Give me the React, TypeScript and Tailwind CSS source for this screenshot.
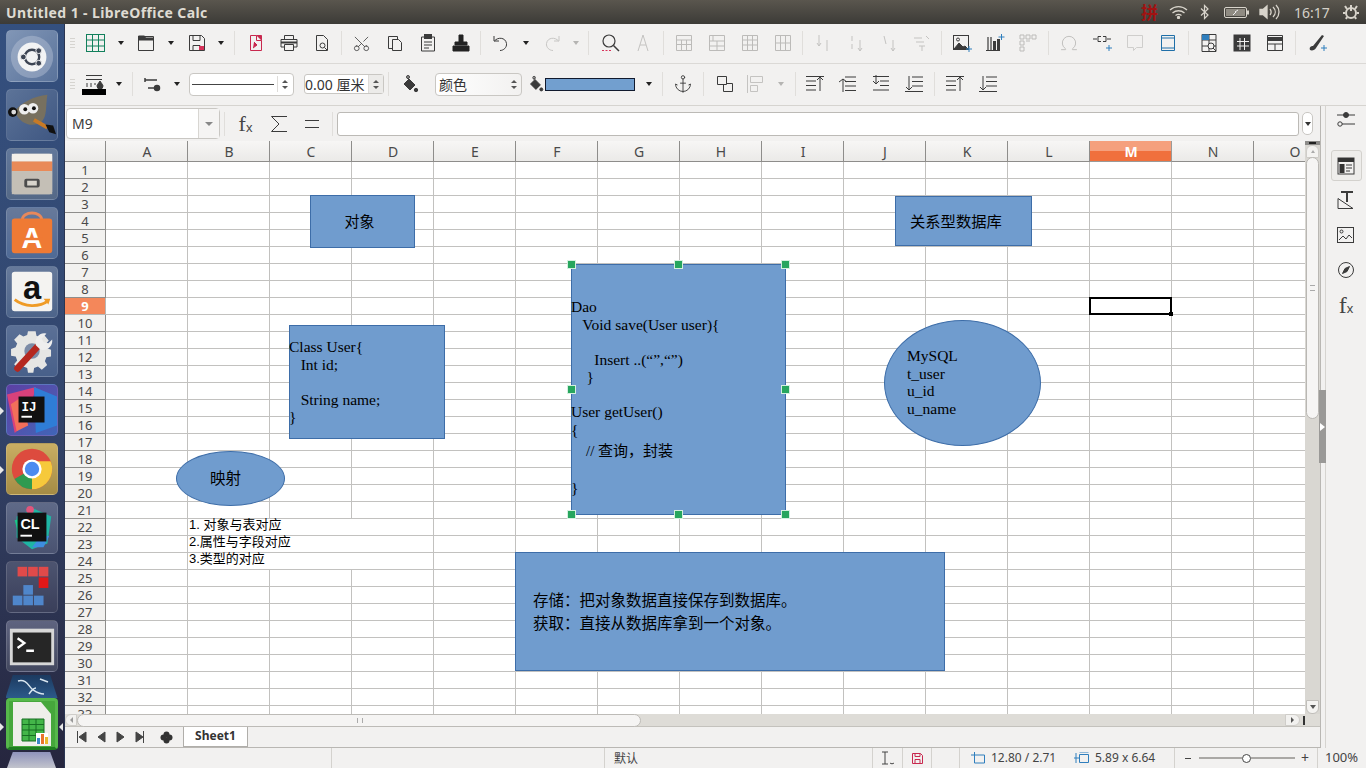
import React from 'react';
import { Scissors, Anchor, Omega } from 'lucide-react';

const D = '#3b3b3b';
type P = { children?: React.ReactNode; s?: number; c?: string; w?: number };
const G = ({ children, s = 20, c = D, w = 1 }: P) => (
  <svg width={s} height={s} viewBox="0 0 20 20" fill="none" stroke={c} strokeWidth={w}>{children}</svg>
);

const icons: Record<string, React.ReactNode> = {
  table: <G c="#12805c"><rect x=".5" y="1.5" width="18" height="17" /><path d="M.5 7h18M.5 13h18M6.500 1.500v17M12.500 1.500v17" /></G>,
  open: <G><path d="M2.500 3.500h15v14h-15z" /><path d="M2.500 3h6l1 2h8v2h-15z" fill={D} /></G>,
  save: <G><path d="M2.500 2.500h12l3 3v12h-15z" /><path d="M6 2.500v5h7v-5M6 17.500v-5h7v5" /><rect x="12" y="13" width="5" height="4" fill="#d8325a" stroke="none" /></G>,
  pdf: <G c="#c8284e"><path d="M4.500 2.500h6v5h5v10h-11z" /><path d="M10.500 2.500h5v5M8 9l3 3-4 3" fill="#c8284e" /></G>,
  print: <G><path d="M5.500 6.500v-4h9v4M5.500 14h-3.500v-7.500h16v7.500h-3.500" /><path d="M5.500 11.500h9v6h-9z" /><path d="M2 9.500h16" strokeWidth="2" /></G>,
  preview: <G><path d="M4.500 2.500h7l4 4v11h-11z" /><circle cx="10.500" cy="12.500" r="2.500" /><path d="M12.500 14.500l2.500 2.500" /></G>,
  cut: <Scissors size={19} strokeWidth={1} color={D} className="rotate-[-90deg]" />,
  copy: <G><path d="M3.500 3.500h9v12h-9z" /><path d="M7.500 6.500h6l3 3v8h-9z" fill="#f2f1f0" /></G>,
  paste: <G><path d="M3.500 4h13v14h-13z" /><rect x="6.500" y="1.500" width="7" height="4" fill={D} /><path d="M6 9h8M6 12h8M6 15h5" /></G>,
  clone: <G c="#222"><path d="M8 2h4v7h4v3h-12v-3h4z" fill="#222" /><path d="M2 13h16v5h-16z" fill="#222" /></G>,
  undo: <G><path d="M3 3v5h5" /><path d="M3.500 8c3-4 11-4 12 2.500c.5 4-3 7-6.500 7" /></G>,
  redo: <G c="#c7c6c4"><path d="M17 3v5h-5" /><path d="M16.500 8c-3-4-11-4-12 2.500c-.5 4 3 7 6.500 7" /></G>,
  find: <G w={1.2}><circle cx="9" cy="8" r="6" /><path d="M13.500 12.500l5.500 5.500" strokeWidth="1.500" /><path d="M2 17.500h10" stroke="#d8325a" strokeDasharray="2 1.500" /></G>,
  spell: <G c="#c4c3c1"><path d="M5 18L10 2l5 16M7 12h6" /></G>,
  r1: <G c="#bcbbb9"><path d="M2.500 2.500h15v15h-15zM2.500 7h15M2.500 11.500h15M7.500 7v10.500M12.500 7v10.500" /></G>,
  r2: <G c="#bcbbb9"><path d="M2.500 2.500h15v15h-15zM2.500 8h15M2.500 13h15M10 8v9.500M6 2.500v5.500" /></G>,
  r3: <G c="#bcbbb9"><path d="M2.500 2.500h15v15h-15zM2.500 7h15M2.500 12h15M7.500 2.500v15M12.500 2.500v15" /></G>,
  r4: <G c="#bcbbb9"><path d="M2.500 2.500h15v15h-15zM7.500 2.500v15M12.500 2.500v15M2.500 10h15" /></G>,
  s1: <G c="#c4c3c1"><path d="M6 2v11M14 7v11M4 10l2 3 2-3" /></G>,
  s2: <G c="#c4c3c1"><path d="M6 3v5M6 11v5M14 7v11M12 15l2 3 2-3" /></G>,
  s3: <G c="#c4c3c1"><path d="M5 3l2 8M14 7v11M12 15l2 3 2-3" /></G>,
  s4: <G c="#c4c3c1"><path d="M2 5h8M4 9h8M7 13h6M10 13v5M14 3l3 3" /></G>,
  image: <G><rect x="1.500" y="2.500" width="15" height="14" fill="#f2f1f0" /><path d="M2 16l5-6 4 4 2-1 3 3z" fill={D} /><circle cx="6" cy="6.500" r="1.500" /><path d="M17 13v6M14 16h6" stroke="#2f7ebd" /></G>,
  chart: <G><path d="M1 17.500h14M3 4v13M6 4v13" strokeWidth="1.200" /><rect x="8" y="8" width="3" height="9" fill={D} stroke="none" /><rect x="12" y="6" width="3" height="11" fill={D} stroke="none" /><path d="M16.500 1v6M13.500 4h6" stroke="#2f7ebd" /></G>,
  pivot: <G c="#bcbbb9"><path d="M2 2h4v4h-4zM8 2h4v4h-4zM14 2h4v4h-4zM2 8h4v4h-4zM8 8h4M2 14h4v4h-4z" /></G>,
  omega: <Omega size={20} strokeWidth={1.1} color="#bcbbb9" />,
  link: <G><path d="M1 6h4M15 6h4M6 3.500h3M11 3.500h3M6 8.500h3M11 8.500h3M6 3.500v5M14 3.500v5" /><path d="M14 15h6M17 12v6" stroke="#2f7ebd" /></G>,
  comment: <G c="#cfcecc"><path d="M2.500 2.500h15v12h-6l-3 3v-3h-6z" /></G>,
  header: <G c="#1f6fa8"><path d="M3.500 2.500h13v15h-13z" /><path d="M3.500 5h13M3.500 15h13" /></G>,
  area: <G><path d="M3 1.500h14v17h-14zM3 7h14M3 13h14M10 1.500v17" /><rect x="3" y="1.500" width="7" height="5.500" fill="#2f7ebd" stroke="none" /><circle cx="12" cy="13" r="3" fill="#f2f1f0" /><path d="M14 15l3 3" /></G>,
  freeze: <G><rect x="2" y="2" width="16" height="16" fill="#3b3b3b" /><path d="M5 8.500h12M5 13h12M8 5v12M12.500 5v12" stroke="#f2f1f0" /></G>,
  split: <G><path d="M2.500 2.500h15v15h-15z" /><path d="M2 6h16" strokeWidth="4" /><path d="M2.500 11h15M10 11v6.500" /></G>,
  draw: <G><path d="M3 17c-1-3 1-4 3-4l9-11 2 1-8 12c-1 2-4 3-6 2z" fill={D} stroke="none" /><path d="M17 12v6M14 15h6" stroke="#2f7ebd" /></G>,
  lineColor: <svg width="24" height="22" viewBox="0 0 24 22" fill="none" stroke={D}><path d="M4 2.500h16M4 6.500h16" /><path d="M4 11h2M8 11h2M12 11h2M4 13h2M8 13h2" /><path d="M18 8c-2 3-3 4-3 5a3 3 0 006 0c0-1-1-2-3-5z" fill={D} /><rect x="0" y="16" width="24" height="6" fill="#000" stroke="none" /></svg>,
  arrow: <svg width="17" height="15" viewBox="0 0 17 15" fill={D} stroke={D} strokeWidth="1.500"><path d="M1 3h12M4 11h12" /><path d="M1 1v4" /><circle cx="13" cy="11" r="2.500" /></svg>,
  fill: <G><path d="M9 2v3M5 10l5-5 6 6-5 5z" fill={D} /><circle cx="9" cy="3" r="1.500" /><circle cx="17" cy="16" r="1.700" fill={D} /></G>,
  wrap: <G><path d="M2.500 2.500h9v8h-9z" /><path d="M8.500 10.500v7h9v-8h-6" /></G>,
  align: <G c="#c4c3c1"><path d="M2.500 1v18M5.500 2.500h12v6h-12zM5.500 11.500h7v6h-7z" /></G>,
  up1: <G><path d="M1 2.500h18M1 7h10M1 11.500h10M1 16h10M15 17V3M12 6l3-3 3 3" /></G>,
  up2: <G><path d="M7 3h11M7 7.500h11M7 12h11M7 16.500h11M1 8l4-3 4 3M5 5v13" /></G>,
  dn1: <G><path d="M2 2.500h16M9 7h9M9 11.500h9M2 16h16M5 1v9M2 7l3 3 3-3" /></G>,
  dn2: <G><path d="M8 3h11M8 7.500h11M8 12h11M1 17.500h18M5 2v14M2 13l3 3 3-3" /></G>,
  sliders: <G><path d="M1 5h18M6 14h13" /><circle cx="10" cy="5" r="2.500" fill={D} /><circle cx="4" cy="14" r="2.200" /></G>,
  props: <G><rect x="2" y="2" width="16" height="16" fill="#f2f1f0" /><rect x="2" y="2" width="16" height="4" fill="#333" stroke="none" /><rect x="3.500" y="8" width="5" height="9" fill="#333" stroke="none" /><path d="M10 9h6M10 12h6M10 15h4" /></G>,
  style: <G><path d="M5 2h12M11 2v10" strokeWidth="2" /><path d="M2 8.500v10h15z" /><path d="M2 18.500h15" /></G>,
  gallery: <G><rect x="1.500" y="2.500" width="16" height="15" /><circle cx="5.500" cy="6.500" r="1.500" /><path d="M3 15l4-4 3 3 3-4 3 3" /></G>,
  nav: <G><circle cx="10" cy="10" r="7.500" /><path d="M13.500 6.500l-2.500 5-4.500 2 2.500-5z" fill={D} /></G>,
};

const grip = (
  <div className="w-[14px] h-[20px] flex flex-col justify-center gap-[2px] items-center shrink-0">
    {[0, 1, 2, 3].map(i => <span key={i} className="w-[5px] h-px bg-[#d6d4d0]" />)}
  </div>
);
const Ic = ({ n, w = 33 }: { n: string; w?: number }) => <div className="h-full flex items-center justify-center shrink-0" style={{ width: w }}>{icons[n]}</div>;
const Caret = ({ off, w = 17 }: { off?: boolean; w?: number }) => (
  <div className="h-full flex items-center justify-center shrink-0" style={{ width: w }}>
    <span className={off ? 'w-0 h-0 border-x-[3.5px] border-x-transparent border-t-[4px] border-t-[#b5b4b2]' : 'w-0 h-0 border-x-[3.5px] border-x-transparent border-t-[4px] border-t-[#222]'} />
  </div>
);
const Sep = ({ w = 8 }: { w?: number }) => (
  <div className="h-full flex items-center justify-center shrink-0" style={{ width: w }}><span className="w-px h-[24px] bg-[#e0dedb]" /></div>
);
const Spin = () => (
  <div className="w-[14px] flex flex-col items-center justify-center gap-[3px] shrink-0">
    <span className="w-0 h-0 border-x-[3px] border-x-transparent border-b-[3px] border-b-[#555]" />
    <span className="w-0 h-0 border-x-[3px] border-x-transparent border-t-[3px] border-t-[#555]" />
  </div>
);

const Tile = ({ children, cls }: { children: React.ReactNode; cls: string }) => (
  <div className={`w-[52px] h-[52px] rounded-[5px] overflow-hidden shrink-0 border border-[#ffffff22] ${cls}`}>{children}</div>
);
const V = ({ children }: { children: React.ReactNode }) => <svg width="50" height="50" viewBox="0 0 52 52">{children}</svg>;

const Launcher = () => (
  <div className="relative w-[65px] shrink-0 h-full overflow-hidden bg-gradient-to-b from-[#34507f] via-[#33466d] to-[#26263e] border-r border-[#2a3552] flex flex-col items-center pt-[6px] gap-[7px] pr-px">
    <Tile cls="bg-gradient-to-br from-[#8196b6] to-[#5a739b]"><V>
      <circle cx="26" cy="27" r="22" fill="#b8c4d6" opacity=".45" />
      <circle cx="26" cy="27" r="15" fill="#f2f3f4" />
      <circle cx="26" cy="27" r="7.500" fill="none" stroke="#3c4453" strokeWidth="2.500" />
      <circle cx="33" cy="20.500" r="3" fill="#3c4453" stroke="#f2f3f4" /><circle cx="33" cy="33.500" r="3" fill="#3c4453" stroke="#f2f3f4" /><circle cx="17" cy="27" r="3" fill="#3c4453" stroke="#f2f3f4" />
    </V></Tile>
    <Tile cls="bg-gradient-to-br from-[#5c7398] to-[#3f5782]"><V>
      <path d="M8 22c6-8 20-16 34-17-2 12 0 22-6 28-8 6-22 4-28-11z" fill="#77705f" />
      <circle cx="6" cy="23" r="5" fill="#111" /><circle cx="7" cy="23" r="2.500" fill="#ddd" />
      <circle cx="18" cy="20" r="5.500" fill="#eee" /><circle cx="19" cy="20" r="2" fill="#111" />
      <circle cx="27" cy="19" r="5.500" fill="#eee" /><circle cx="28" cy="19" r="2" fill="#111" />
      <path d="M28 31l14 8" stroke="#c77a27" strokeWidth="4" />
      <path d="M40 36l8 1 3 9-7-2z" fill="#111" />
    </V></Tile>
    <Tile cls="bg-gradient-to-b from-[#61779a] to-[#556987]"><V>
      <rect x="5" y="5" width="42" height="42" rx="3" fill="#d6d1c8" />
      <rect x="5" y="5" width="42" height="8" fill="#f3f0ea" />
      <rect x="5" y="13" width="42" height="10" fill="#e98a58" />
      <rect x="5" y="23" width="42" height="24" fill="#c4bfb6" />
      <rect x="18" y="31" width="16" height="9" rx="2" fill="#4c4c4c" /><rect x="21" y="33" width="10" height="5" fill="#d8d4cc" />
    </V></Tile>
    <Tile cls="bg-gradient-to-b from-[#67799a] to-[#4f6a96]"><V>
      <path d="M16 12c0-9 20-9 20 0" fill="none" stroke="#e8885a" strokeWidth="3" />
      <rect x="5" y="11" width="42" height="36" rx="3" fill="#ef7a34" />
      <text x="26" y="42" fontSize="30" fontWeight="700" textAnchor="middle" fill="#fff" fontFamily="Liberation Sans">A</text>
      <rect x="15" y="31" width="22" height="2.500" fill="#ef7a34" />
    </V></Tile>
    <Tile cls="bg-gradient-to-b from-[#66799a] to-[#4d648a]"><V>
      <rect x="5" y="5" width="42" height="41" rx="3" fill="#f4f3f1" />
      <text x="26" y="33" fontSize="34" fontWeight="700" textAnchor="middle" fill="#111" fontFamily="Liberation Sans">a</text>
      <path d="M8 34c10 8 26 8 35 1" fill="none" stroke="#ef9b26" strokeWidth="3" />
      <path d="M38 33l7 0-2 6z" fill="#ef9b26" />
    </V></Tile>
    <Tile cls="bg-gradient-to-b from-[#5b7096] to-[#48608a]"><V>
      <path d="M21 3h10l1 6 5 2 5-3 6 7-4 5 1 5 6 2v9l-6 1-2 5 3 5-7 6-5-4-5 2-1 6H21l-1-6-5-2-5 4-7-7 4-5-2-5-6-1v-9l6-2 2-5-4-5 7-7 5 3 5-2z" transform="translate(5 3) scale(.8)" fill="#e6e6e4" />
      <circle cx="26" cy="26" r="8" fill="#7c8ba6" />
      <path d="M11 44L34 19" stroke="#b5271f" strokeWidth="7" strokeLinecap="round" />
      <path d="M30 20c-2-7 4-14 11-12l-5 5 2 4 5 1 4-4c1 8-7 13-13 10z" fill="#eee" />
    </V></Tile>
    <Tile cls="bg-gradient-to-br from-[#5c3fa4] to-[#3f65b7]"><V>
      <path d="M0 10L30 2 20 40 8 50z" fill="#d8417b" /><path d="M28 2l24 10v30L30 50z" fill="#2f7dd6" /><path d="M4 20l12-8 6 30-12 6z" fill="#f26f5a" />
      <rect x="12" y="12" width="27" height="27" fill="#111" />
      <text x="15" y="27" fontSize="13" fontWeight="700" fill="#fff" fontFamily="Liberation Mono">IJ</text>
      <rect x="15" y="32" width="11" height="2" fill="#fff" />
    </V></Tile>
    <Tile cls="bg-gradient-to-b from-[#c9ae63] to-[#a58c45]"><V>
      <circle cx="26" cy="26" r="21" fill="#dd4b3e" />
      <path d="M26 26L7.800 36.500A21 21 0 0 0 26 47z" fill="#2f9a50" />
      <path d="M26 26V47A21 21 0 0 0 47 26c0-3-.6-5.500-1.800-8H26z" fill="#f6c93b" />
      <circle cx="26" cy="26" r="10" fill="#fff" /><circle cx="26" cy="26" r="7.500" fill="#4c8bf0" />
    </V></Tile>
    <Tile cls="bg-gradient-to-b from-[#5f6a88] to-[#4a5371]"><V>
      <path d="M10 14l18-8 18 8-4 28-16 6-16-12z" fill="#1fb5a4" /><path d="M8 18l14-4-8 26z" fill="#19c98a" /><path d="M34 36l10-2-6 12-12 0z" fill="#3e8de0" /><circle cx="24" cy="7" r="4" fill="#e0567c" />
      <rect x="11" y="10" width="30" height="30" fill="#111" />
      <text x="14" y="27" fontSize="15" fontWeight="700" fill="#fff" fontFamily="Liberation Sans">CL</text>
      <rect x="14" y="33" width="12" height="2" fill="#fff" />
    </V></Tile>
    <Tile cls="bg-gradient-to-b from-[#4d5470] to-[#3a3f5a]"><V>
      <rect x="11" y="5" width="10" height="10" fill="#e04a4a" /><rect x="22" y="5" width="10" height="10" fill="#e04a4a" /><rect x="33" y="5" width="10" height="10" fill="#e04a4a" /><rect x="33" y="16" width="10" height="11" fill="#e01818" />
      <rect x="17" y="24" width="10" height="10" fill="#4f86cb" /><rect x="6" y="35" width="10" height="10" fill="#4f86cb" /><rect x="17" y="35" width="10" height="10" fill="#4f86cb" /><rect x="28" y="35" width="10" height="10" fill="#4f86cb" />
    </V></Tile>
    <Tile cls="bg-gradient-to-b from-[#5f6480] to-[#43485f]"><V>
      <rect x="3" y="8" width="46" height="38" fill="#d7d7d7" /><rect x="6" y="12" width="40" height="31" fill="#262626" />
      <path d="M11 18l7 5-7 5" fill="none" stroke="#fff" strokeWidth="2.500" /><path d="M20 31h8" stroke="#fff" strokeWidth="2.500" />
    </V></Tile>
    <div className="w-[52px] h-[23px] -mt-[4px] -mb-[7px] shrink-0 overflow-hidden [clip-path:polygon(14%_0,86%_0,100%_100%,0_100%)] bg-gradient-to-b from-[#1c3a60] to-[#2c5a8a]">
      <svg width="52" height="23" viewBox="0 0 52 23"><path d="M12 6c8-2 10 4 14 8 3 2 6 5 12 5M30 13c-3 0-5 3-7 6M34 4l8 3" fill="none" stroke="#d8e6f0" strokeWidth="1.500" /></svg>
    </div>
    <div className="w-[52px] h-[52px] rounded-[4px] bg-[#46a73c] shrink-0 flex items-center justify-center border-[3px] border-[#56b84b] border-b-[#1e7d20]">
      <svg width="44" height="46" viewBox="0 0 44 46">
        <path d="M3 1h28l10 12v32H3z" fill="#eeeeea" />
        <path d="M12 18h22v22H12z" fill="#43b649" stroke="#176e23" />
        <path d="M12 23.500h22M12 29h22M12 34.500h22M19 18v22M26 18v22" stroke="#176e23" />
        <rect x="26" y="32" width="12" height="11" fill="#fff" /><rect x="27" y="37" width="3" height="6" fill="#3b87c7" /><rect x="31" y="33" width="3" height="10" fill="#e8742b" /><rect x="35" y="36" width="3" height="7" fill="#e8b92b" />
      </svg>
    </div>
    <div className="w-[52px] h-[20px] -mt-[5px] shrink-0 bg-gradient-to-b from-[#8f93bb] to-[#d0d0d0] [clip-path:polygon(14%_0,86%_0,100%_100%,0_100%)]" />
    <span className="absolute left-0 top-[383px] w-0 h-0 border-y-[4px] border-y-transparent border-l-[4px] border-l-[#e8e8e8]" />
    <span className="absolute left-0 top-[442px] w-0 h-0 border-y-[4px] border-y-transparent border-l-[4px] border-l-[#e8e8e8]" />
    <span className="absolute left-0 top-[699px] w-0 h-0 border-y-[4px] border-y-transparent border-l-[4px] border-l-[#e8e8e8]" />
    <span className="absolute right-[1px] top-[699px] w-0 h-0 border-y-[4px] border-y-transparent border-r-[4px] border-r-[#e8e8e8]" />
  </div>
);

const TitleBar = () => (
  <div className="h-[24px] shrink-0 bg-gradient-to-b from-[#5a564e] to-[#3c3b37] flex items-center text-[#dfdbd2]">
    <span className="pl-[6px] text-[14px] font-bold tracking-[0.4px]">Untitled 1 - LibreOffice Calc</span>
    <div className="ml-auto flex items-center h-full">
      <span className="text-[#a11212] text-[17px] font-bold w-[18px] font-['Noto_Sans_CJK_SC',sans-serif]">拼</span>
      <svg className="ml-[10px]" width="19" height="14" viewBox="0 0 19 14" fill="none" stroke="#d8d4cb" strokeWidth="1.300"><path d="M1 5c5-4.500 12-4.500 17 0M3.500 8c3.500-3 8.500-3 12 0M6.500 10.500c2-1.500 4-1.500 6 0" /><circle cx="9.500" cy="12.500" r="1" fill="#d8d4cb" /></svg>
      <svg className="ml-[12px]" width="9" height="16" viewBox="0 0 9 16" fill="none" stroke="#d8d4cb" strokeWidth="1.200"><path d="M1 4.500l7 6.500-3.500 3.500V1.500L8 5l-7 6.500" /></svg>
      <svg className="ml-[15px]" width="26" height="13" viewBox="0 0 26 13" fill="none" stroke="#d8d4cb"><rect x=".5" y="1.500" width="22" height="10" rx="1.500" /><rect x="2" y="3" width="19" height="7" fill="#8f8b82" stroke="none" /><path d="M24 4.500v4" strokeWidth="2" /><path d="M9 9l3-3h-1l3-2" stroke="#eee" /></svg>
      <svg className="ml-[9px]" width="22" height="16" viewBox="0 0 22 16" fill="none" stroke="#d8d4cb" strokeWidth="1.300"><path d="M1 5.500h3l4-3.500v12l-4-3.500H1z" fill="#d8d4cb" /><path d="M11 5c1.500 2 1.500 4 0 6M14 3c3 3 3 7 0 10M17 1c4 4 4 10 0 14" /></svg>
      <span className="ml-[13px] w-[35px] text-[14px] text-[#d5d1c8]">16:17</span>
      <svg className="ml-[14px] mr-[7px]" width="16" height="16" viewBox="0 0 16 16" fill="none" stroke="#d8d4cb" strokeWidth="2"><circle cx="8" cy="9" r="5" /><path d="M8 1v6M2 2l2 3M14 2l-2 3M0 9h2M14 9h2M3 15l1-2M13 15l-1-2" /></svg>
    </div>
  </div>
);

const Toolbar1 = () => (
  <div className="h-[40px] shrink-0 bg-[#f2f1f0] border-b border-[#dbd9d6] flex items-center pb-[1px]">
    {grip}
    <Ic n="table" /><Caret /><Ic n="open" /><Caret w={18} /><Ic n="save" /><Caret w={16} /><Sep w={10} />
    <Ic n="pdf" /><Ic n="print" /><Ic n="preview" /><Sep w={7} />
    <Ic n="cut" /><Ic n="copy" /><Ic n="paste" /><Ic n="clone" /><Sep w={7} />
    <Ic n="undo" /><Caret w={18} /><Ic n="redo" /><Caret off w={16} /><Sep w={9} />
    <Ic n="find" /><Ic n="spell" /><Sep />
    <Ic n="r1" /><Ic n="r2" /><Ic n="r3" /><Ic n="r4" /><Sep w={7} />
    <Ic n="s1" /><Ic n="s2" /><Ic n="s3" /><Ic n="s4" /><Sep w={7} />
    <Ic n="image" /><Ic n="chart" /><Ic n="pivot" /><Sep />
    <Ic n="omega" /><Ic n="link" /><Ic n="comment" /><Ic n="header" /><Sep />
    <Ic n="area" /><Ic n="freeze" /><Ic n="split" /><Sep w={9} />
    <Ic n="draw" />
  </div>
);

const Toolbar2 = () => (
  <div className="h-[42px] shrink-0 bg-[#f2f1f0] border-b border-[#d6d4d0] flex items-center pb-[1px]">
    {grip}
    <Ic n="lineColor" w={30} /><Caret w={20} /><Sep w={7} /><span className="w-[4px] shrink-0" />
    <Ic n="arrow" w={24} /><span className="w-[5px] shrink-0" /><Caret w={16} />
    <div className="ml-[4px] w-[105px] h-[23px] bg-white border border-[#c9c7c3] rounded-[4px] flex items-center shrink-0">
      <span className="ml-[2px] w-[82px] h-px bg-[#444]" /><span className="ml-[3px] w-px h-[16px] bg-[#dedcd9]" /><Spin />
    </div>
    <div className="ml-[10px] w-[80px] h-[20px] bg-white border border-[#c9c7c3] rounded-[3px] flex items-center shrink-0 text-[14px] text-[#333]">
      <span className="flex-1 whitespace-nowrap font-['Noto_Sans','Noto_Sans_CJK_SC',sans-serif]">0.00 厘米</span><div className="h-full border-l border-[#dedcd9] bg-[#ecebe9] flex"><Spin /></div>
    </div>
    <Sep w={8} />
    <Ic n="fill" w={34} /><span className="w-[9px] shrink-0" />
    <div className="w-[87px] h-[23px] bg-gradient-to-r from-white to-[#f2f1f0] border border-[#c9c7c3] rounded-[4px] flex items-center shrink-0 text-[14px] text-[#333]">
      <span className="flex-1 pl-[3px] font-['Noto_Sans_CJK_SC',sans-serif]">颜色</span><Spin />
    </div>
    <span className="w-[4px] shrink-0" /><Ic n="fill" w={18} />
    <div className="w-[90px] h-[13px] bg-[#729fcf] border border-[#111a2e] shrink-0 ml-px" />
    <Caret w={27} /><Sep w={1} />
    <div className="h-full flex items-center justify-center w-[40px] shrink-0"><Anchor size={20} strokeWidth={1.1} color={D} /></div>
    <Sep w={1} /><span className="w-[4px] shrink-0" />
    <Ic n="wrap" w={33} /><Ic n="align" w={28} /><Caret off w={24} /><Sep w={4} /><span className="w-[1px] shrink-0" />
    <Ic n="up1" /><Ic n="up2" /><Ic n="dn1" /><Ic n="dn2" /><Sep w={8} />
    <Ic n="up1" w={33} /><Ic n="dn2" w={33} />
  </div>
);

const Fx = ({ cls }: { cls: string }) => (
  <div className={`flex items-center justify-center shrink-0 font-['Liberation_Serif',serif] text-[#444] ${cls}`}>f<span className="text-[13px] mt-[8px] font-['Liberation_Sans',sans-serif]">x</span></div>
);

const FormulaBar = () => (
  <div className="h-[35px] shrink-0 bg-[#f2f1f0] flex items-center pl-px">
    <div className="w-[154px] h-[31px] bg-white border border-[#c9c7c3] rounded-[4px] flex items-center shrink-0">
      <span className="flex-1 pl-[5px] text-[14px] text-[#3c3c3c]">M9</span>
      <div className="w-[21px] h-full border-l border-[#d8d6d2] bg-[#f5f4f3] flex items-center justify-center"><span className="w-0 h-0 border-x-[4px] border-x-transparent border-t-[4px] border-t-[#888]" /></div>
    </div>
    <Sep w={9} />
    <Fx cls="w-[33px] h-full text-[22px]" />
    <div className="w-[33px] h-full flex items-center justify-center shrink-0"><svg width="18" height="18" viewBox="0 0 18 18" fill="none" stroke={D}><path d="M17 1.500H1.500L9 9l-7.500 7.500H17" /></svg></div>
    <div className="w-[33px] h-full flex items-center justify-center shrink-0"><svg width="14" height="10" viewBox="0 0 14 10" stroke={D}><path d="M0 1.500h14M0 8.500h14" /></svg></div>
    <Sep w={8} />
    <div className="ml-[1px] w-[962px] h-[24px] bg-white border border-[#bcbab6] rounded-[3px] shrink-0" />
    <div className="ml-[3px] w-[11px] h-[23px] bg-white border border-[#c9c7c3] rounded-[5px] flex items-center justify-center shrink-0"><span className="w-0 h-0 border-x-[3px] border-x-transparent border-t-[4px] border-t-[#333]" /></div>
  </div>
);

const cols = ['A','B','C','D','E','F','G','H','I','J','K','L','M','N','O'];
const rows = Array.from({ length: 33 }, (_, i) => i + 1);

const serif = "font-['Liberation_Serif','Noto_Sans_CJK_SC',serif] text-[15.500px] text-black";
const cjk = "font-['Noto_Sans_CJK_SC',sans-serif] text-black";

const L = ({ children }: { children?: React.ReactNode }) => <div className="whitespace-pre h-[17.500px] leading-[17.500px] -ml-px">{children}</div>;
const shape = 'absolute bg-[#709cce] border border-[#3d6da8]';
const hb = 'absolute w-[9px] h-[9px] bg-[#27a65e] border border-[#d4f0df]';

const Grid = () => (
  <div className="relative flex-1 overflow-hidden bg-white font-['Liberation_Sans','Noto_Sans_CJK_SC',sans-serif]">
    <div className="flex h-[21px] w-[1400px]">
      <div className="w-[41px] h-full shrink-0 border-r border-b border-[#8e8d8b] bg-gradient-to-b from-[#f7f6f5] to-[#ebeae8]" />
      {cols.map(c => (
        <div key={c} className={c === 'M'
          ? 'w-[82px] h-full shrink-0 pl-px border-r border-b border-[#9a9a98] bg-gradient-to-b from-[#f5a07d] from-50% to-[#f0703d] to-50% text-white font-bold text-center text-[14px] leading-[21px] font-[Noto_Sans]'
          : 'w-[82px] h-full shrink-0 pl-px border-r border-b border-[#8e8d8b] bg-gradient-to-b from-[#f7f6f5] to-[#ebeae8] text-[#4a4a4a] text-center text-[14px] leading-[21px] font-[Noto_Sans]'}>{c}</div>
      ))}
    </div>
    {rows.map(r => (
      <div key={r} className="flex h-[17px] w-[1400px]">
        <div className={r === 9
          ? 'w-[41px] shrink-0 h-full border-r border-b border-[#b8b7b5] bg-[#f4875a] text-white font-bold text-center text-[13px] leading-[17px] font-[Noto_Sans]'
          : 'w-[41px] shrink-0 h-full border-r border-b border-[#8e8d8b] bg-[#f2f1ef] text-[#4a4a4a] text-center text-[13px] leading-[17px] font-[Noto_Sans]'}>{r}</div>
        {cols.map(c => {
          const merged = r >= 22 && r <= 24 && (c === 'B' || c === 'C');
          return <div key={c} className={merged ? 'w-[82px] shrink-0 h-full border-b border-[#c2c1bf]' : 'w-[82px] shrink-0 h-full border-r border-b border-[#c2c1bf]'}>
            {c === 'B' && r === 22 && <div className="pl-[1px] text-[13px] leading-[12px] whitespace-nowrap text-black">1. 对象与表对应</div>}
            {c === 'B' && r === 23 && <div className="pl-[1px] text-[13px] leading-[12px] whitespace-nowrap text-black">2.属性与字段对应</div>}
            {c === 'B' && r === 24 && <div className="pl-[1px] text-[13px] leading-[12px] whitespace-nowrap text-black">3.类型的对应</div>}
          </div>;
        })}
      </div>
    ))}

    <div className={`${shape} left-[245px] top-[54px] w-[105px] h-[53px] flex items-center justify-center text-[15px] pr-[6px] ${cjk}`}>对象</div>
    <div className={`${shape} left-[830px] top-[55px] w-[137px] h-[50px] flex items-center pl-[14px] pb-[2px] text-[15.300px] ${cjk}`}>关系型数据库</div>
    <div className={`${shape} left-[224px] top-[184px] w-[156px] h-[114px] flex flex-col justify-center ${serif}`}>
      <L>Class User{'{'}</L><L>   Int id;</L><L></L><L>   String name;</L><L>{'}'}</L>
    </div>
    <div className={`${shape} left-[111px] top-[310px] w-[109px] h-[55px] rounded-[50%] flex items-center justify-center pr-[10px] pb-[2px] text-[15.500px] ${cjk}`}>映射</div>
    <div className={`${shape} left-[506px] top-[123px] w-[215px] h-[251px] pt-[33px] ${serif}`}>
      <L>Dao</L><L>   Void save(User user){'{'}</L><L></L><L>      Insert ..(“”,“”)</L><L>    {'}'}</L><L></L><L>User getUser()</L><L>{'{'}</L>
      <div className="whitespace-pre h-[23px] leading-[26px] -ml-px text-[15px]">    // 查询，封装</div><L></L><L>{'}'}</L>
      <span className={`${hb} -left-[5px] -top-[5px]`} /><span className={`${hb} left-[102px] -top-[5px]`} /><span className={`${hb} -right-[5px] -top-[5px]`} />
      <span className={`${hb} -left-[5px] top-[120px]`} /><span className={`${hb} -right-[5px] top-[120px]`} />
      <span className={`${hb} -left-[5px] -bottom-[5px]`} /><span className={`${hb} left-[102px] -bottom-[5px]`} /><span className={`${hb} -right-[5px] -bottom-[5px]`} />
    </div>
    <div className={`${shape} left-[819px] top-[179px] w-[157px] h-[126px] rounded-[50%] pl-[23px] pt-[26px] ${serif}`}>
      <L>MySQL</L><L>t_user</L><L>u_id</L><L>u_name</L>
    </div>
    <div className={`${shape} left-[450px] top-[411px] w-[430px] h-[119px] flex flex-col justify-center pl-[17px] pb-[2px] text-[15.500px] leading-[23px] ${cjk}`}>
      <div>存储：把对象数据直接保存到数据库。</div><div>获取：直接从数据库拿到一个对象。</div>
    </div>
    <div className="absolute left-[1024px] top-[156px] w-[83px] h-[18px] border-2 border-black">
      <span className="absolute -right-[3px] -bottom-[3px] w-[4px] h-[4px] bg-black" />
    </div>
  </div>
);

const VScroll = () => (
  <div className="w-[15px] shrink-0 bg-[#d9d7d2] flex flex-col items-center relative">
    <div className="w-full h-[4px] bg-[#8c8b89] flex items-center justify-center"><span className="w-[7px] h-[2px] bg-[#222]" /></div>
    <div className="w-[13px] h-[13px] bg-[#f4f3f1] rounded-t-[6px] border border-[#cfcdc9] flex items-center justify-center"><span className="w-0 h-0 border-x-[2px] border-x-transparent border-b-[3px] border-b-[#aaa]" /></div>
    <div className="w-[13px] h-[262px] bg-[#f6f5f4] rounded-[7px] border border-[#b9b7b3] flex items-center justify-center -mt-px">
      <span className="w-[5px] h-[6px] border-y border-[#aaa]" />
    </div>
    <div className="mt-auto w-[13px] h-[14px] bg-[#f4f3f1] rounded-b-[6px] border border-[#c0beba] flex items-center justify-center"><span className="w-0 h-0 border-x-[3px] border-x-transparent border-t-[4px] border-t-[#555]" /></div>
  </div>
);

const HScroll = () => (
  <div className="h-[13px] shrink-0 bg-[#dedcd7] flex items-center border-b border-[#c4c2bd]">
    <div className="w-[12px] h-full bg-[#f2f1ef] flex items-center justify-center rounded-l-[6px] border border-[#cfcdc9]"><span className="w-0 h-0 border-y-[3px] border-y-transparent border-r-[3px] border-r-[#999]" /></div>
    <div className="w-[564px] h-[13px] bg-[#f5f4f3] border border-[#bdbbb7] rounded-[7px] flex items-center justify-center"><span className="w-[6px] h-[5px] border-x border-[#aaa] ml-[1px]" /></div>
    <div className="ml-auto w-[15px] h-full bg-[#f2f1ef] flex items-center justify-center rounded-r-[6px] border border-[#cfcdc9] mr-[3px]"><span className="w-0 h-0 border-y-[3px] border-y-transparent border-l-[3px] border-l-[#555]" /></div>
    <span className="w-[2px] h-[9px] bg-[#333] mr-[15px]" />
  </div>
);

const TabsRow = () => (
  <div className="h-[21px] shrink-0 bg-[#f2f1f0] border-b border-[#b9b7b3] flex items-start text-[#444]">
    <svg className="ml-[12px] mt-[4px]" width="70" height="12" viewBox="0 0 70 12" fill="#444" stroke="#444">
      <path d="M.5 0v12" /><path d="M9 1v10L2 6z" /><path d="M28 1v10l-7-5z" /><path d="M40 1v10l7-5z" /><path d="M59 1v10l7-5z" /><path d="M66.500 0v12" />
    </svg>
    <svg className="ml-[13px] mt-[4px]" width="13" height="13" viewBox="0 0 13 13" fill="#333"><circle cx="6.500" cy="3.500" r="3" /><circle cx="6.500" cy="9.500" r="3" /><circle cx="3.500" cy="6.500" r="3" /><circle cx="9.500" cy="6.500" r="3" /></svg>
    <div className="ml-[10px] w-[65px] h-[20px] bg-white border-x border-b border-[#b0aeaa] text-center text-[12px] font-bold leading-[18px] text-[#333]">Sheet1</div>
  </div>
);

const Sidebar = () => (
  <div className="relative w-[46px] shrink-0 bg-[#f2f1f0] border-l border-[#b9b7b3] flex flex-col items-center pl-[5px] before:absolute before:left-[4px] before:top-0 before:bottom-0 before:w-px before:bg-[#d6d4d0]">
    <div className="h-[27px] flex items-center justify-center shrink-0">{icons.sliders}</div>
    <div className="mt-[17px] w-[31px] h-[31px] border border-[#d3d1cd] rounded-[3px] flex items-center justify-center shrink-0 bg-[#eeedeb]">{icons.props}</div>
    <div className="mt-[1px] h-[35px] flex items-center justify-center shrink-0">{icons.style}</div>
    <div className="h-[35px] flex items-center justify-center shrink-0">{icons.gallery}</div>
    <div className="h-[35px] flex items-center justify-center shrink-0">{icons.nav}</div>
    <Fx cls="h-[36px] text-[24px]" />
    <div className="absolute -left-[2px] top-[284px] w-[7px] h-[73px] bg-[#9a9997] flex items-center justify-center">
      <span className="w-0 h-0 border-y-[4px] border-y-transparent border-l-[5px] border-l-white" />
    </div>
  </div>
);

const Slot = ({ w, children, cls }: { w: number; children?: React.ReactNode; cls?: string }) => (
  <div className={`h-full border-r border-[#d4d2ce] flex items-center shrink-0 ${cls ?? ''}`} style={{ width: w }}>{children}</div>
);

const StatusBar = () => (
  <div className="h-[20px] shrink-0 bg-[#f2f1f0] flex items-center text-[12px] text-[#444]">
    <Slot w={267} /><Slot w={273} />
    <Slot w={268} cls="pl-[9px] font-['Noto_Sans_CJK_SC',sans-serif]">默认</Slot>
    <Slot w={30} cls="justify-center"><svg width="15" height="14" viewBox="0 0 15 14" fill="none" stroke="#444"><path d="M2 1h6M2 13h6M5 1v12M10 12c1 1 3 1 4 0" /></svg></Slot>
    <Slot w={29} cls="justify-center"><svg width="11" height="11" viewBox="0 0 11 11" fill="none" stroke="#c8284e"><path d="M.5.500h8l2 2v8H.500zM3 .5v3h5v-3M3 10.500v-4h5v4" /></svg></Slot>
    <Slot w={28} />
    <Slot w={215} cls="pl-[11px]">
      <svg width="14" height="12" viewBox="0 0 14 12" fill="none" stroke="#2f7ebd"><path d="M3.500 0v6M0 3h13.500v8H3.500v-5" /></svg>
      <span className="ml-[6px] w-[83px] whitespace-nowrap">12.80 / 2.71</span>
      <svg width="15" height="12" viewBox="0 0 15 12" fill="none" stroke="#2f7ebd"><path d="M5.500 2.500h9v8h-9zM2 1v10M0 6h5M5.500 0h9" /></svg>
      <span className="ml-[6px] whitespace-nowrap">5.89 x 6.64</span>
    </Slot>
    <Slot w={143} cls="pl-[10px]">
      <span className="w-[6px] h-px bg-[#444]" />
      <span className="ml-[8px] w-[43px] h-[2px] bg-[#aaa8a5]" />
      <span className="w-[9px] h-[9px] rounded-full border-[1.500px] border-[#444] bg-white" />
      <span className="w-[44px] h-[2px] bg-[#aaa8a5]" />
      <span className="ml-[6px] text-[14px] leading-none">+</span>
    </Slot>
    <span className="pl-[7px] whitespace-nowrap text-[13px]">100%</span>
  </div>
);

export default function App() {
  return (
    <div className="w-[1366px] h-[768px] overflow-hidden flex flex-col bg-[#f2f1f0] font-['Noto_Sans','Noto_Sans_CJK_SC',sans-serif]">
      <TitleBar />
      <div className="flex-1 flex min-h-0">
        <Launcher />
        <div className="flex-1 flex flex-col min-w-0">
          <Toolbar1 />
          <Toolbar2 />
          <div className="flex-1 flex min-h-0">
            <div className="flex-1 flex flex-col min-w-0">
              <FormulaBar />
              <div className="flex-1 flex min-h-0"><Grid /><VScroll /></div>
              <HScroll />
              <TabsRow />
            </div>
            <Sidebar />
          </div>
          <StatusBar />
        </div>
      </div>
    </div>
  );
}
